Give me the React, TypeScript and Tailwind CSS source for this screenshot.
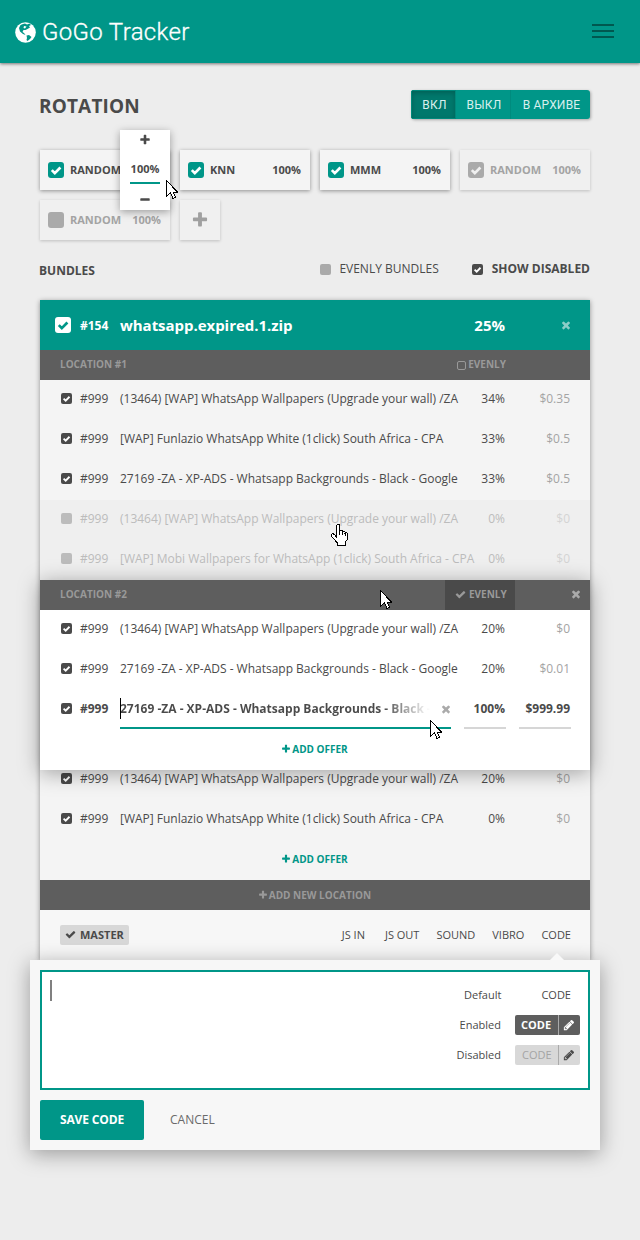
import type { ReactNode } from "react";

const ICONS = {
  check: "M1671 566q0 40-28 68l-724 724-136 136q-28 28-68 28t-68-28l-136-136-362-362q-28-28-28-68t28-68l136-136q28-28 68-28t68 28l294 295 656-657q28-28 68-28t68 28l136 136q28 28 28 68z",
  times: "M1490 1322q0 40-28 68l-136 136q-28 28-68 28t-68-28l-294-294-294 294q-28 28-68 28t-68-28l-136-136q-28-28-28-68t28-68l294-294-294-294q-28-28-28-68t28-68l136-136q28-28 68-28t68 28l294 294 294-294q28-28 68-28t68 28l136 136q28 28 28 68t-28 68l-294 294 294 294q28 28 28 68z",
  plus: "M1600 736v192q0 40-28 68t-68 28h-416v416q0 40-28 68t-68 28h-192q-40 0-68-28t-28-68v-416h-416q-40 0-68-28t-28-68v-192q0-40 28-68t68-28h416v-416q0-40 28-68t68-28h192q40 0 68 28t28 68v416h416q40 0 68 28t28 68z",
  minus: "M1600 736v192q0 40-28 68t-68 28h-1216q-40 0-68-28t-28-68v-192q0-40 28-68t68-28h1216q40 0 68 28t28 68z",
  pencil: "M491 1536l91-91-235-235-91 91v107h128v128h107zm523-928q0-22-22-22-10 0-17 7l-542 542q-7 7-7 17 0 22 22 22 10 0 17-7l542-542q7-7 7-17zm-54-192l416 416-832 832h-416v-416zm683 96q0 53-37 90l-166 166-416-416 166-165q36-38 90-38 53 0 91 38l235 234q37 39 37 91z",
};

function Icon({ name, className }: { name: keyof typeof ICONS; className?: string }) {
  return (
    <svg viewBox="0 0 1792 1792" fill="currentColor" className={`shrink-0 ${className ?? ""}`}>
      <path d={ICONS[name]} />
    </svg>
  );
}

function Box({ checked, className, tick }: { checked: boolean; className: string; tick?: string }) {
  return (
    <svg viewBox="0 0 16 16" className={`shrink-0 ${className}`}>
      <rect width="16" height="16" rx="3" fill="currentColor" />
      {checked && <path d="M3.8 8.1l3 3 5.6-5.6" fill="none" stroke={tick ?? "#fff"} strokeWidth="2.7" />}
    </svg>
  );
}

function Arrow({ className }: { className: string }) {
  return (
    <svg viewBox="0 0 12 19" width="12" height="19" className={`absolute z-30 ${className}`} shapeRendering="crispEdges">
      <path d="M0.5 0.5V16.5L4.5 12.5L7 18.5L9.5 17.5L7.2 12H11.5Z" fill="#fff" stroke="#000" />
    </svg>
  );
}

function Hand({ className }: { className: string }) {
  return (
    <svg viewBox="0 0 17 22" width="17" height="22" className={`absolute z-30 ${className}`} shapeRendering="crispEdges">
      <path d="M5.5 14V2Q5.5 .5 7 .5T8.5 2V7Q9 5.7 10.4 6.2T11.5 8Q12.2 6.7 13.4 7.3T14.2 9Q16.5 7.8 16.5 10.5V15L14.5 18V21.5H6.500V19L1 13Q-.5 10.3 1.5 9.700Q3 9.500 5.500 13M8.500 7V11M11.500 8V11M14.200 9V12" fill="#fff" stroke="#000" />
    </svg>
  );
}

function Card({ name, checked = true, muted = false }: { name: string; checked?: boolean; muted?: boolean }) {
  return (
    <div className={`flex h-10 w-[130px] items-center pl-2 pr-[9px] text-[11px] font-bold ${muted ? "bg-[#f0f0f0] text-[#a3a3a3] shadow-[0_1px_3px_rgba(0,0,0,0.2)]" : "bg-[#f4f4f4] text-[#4a4a4a] shadow-[0_1px_4px_rgba(0,0,0,0.4)]"}`}>
      <Box checked={checked} className={muted ? "size-4 text-[#aaa]" : "size-4 text-[#009688]"} tick={muted ? "#f0f0f0" : "#fff"} />
      <span className="-mt-0.5 ml-1.5 flex-1">{name}</span>
      <span className="-mt-0.5">100%</span>
    </div>
  );
}

type Offer = { title: string; share: string; price: string };
const WALL = "(13464) [WAP] WhatsApp Wallpapers (Upgrade your wall) /ZA";
const FUN = "[WAP] Funlazio WhatsApp White (1click) South Africa - CPA";
const GOOGLE = "27169 -ZA - XP-ADS - Whatsapp Backgrounds - Black - Google";

function Row({ title, share, price, off = false }: Offer & { off?: boolean }) {
  return (
    <div className={`flex h-10 items-center whitespace-nowrap pb-[3px] pl-[20.5px] pr-5 text-[12px] ${off ? "text-[#bcbcbc]" : "text-[#4a4a4a]"}`}>
      <Box checked={!off} className="size-[11px]" />
      <span className="ml-[8.5px] w-10">#999</span>
      <span className="w-[330px] tracking-[-0.01px]">{title}</span>
      <span className="w-[55px] text-right">{share}</span>
      <span className={`flex-1 text-right ${off ? "text-[#d4d4d4]" : "text-[#a4a4a4]"}`}>{price}</span>
    </div>
  );
}

function LocationBar({ label, children }: { label: string; children: ReactNode }) {
  return (
    <div className="flex h-[30px] items-center bg-[#5e5e5e] pl-5 text-[10px] font-bold text-[#999]">
      <span className="-mt-0.5 flex-1">{label}</span>
      {children}
    </div>
  );
}

function AddOffer() {
  return (
    <div className="flex h-10 items-center justify-center gap-[1px] pb-0.5 pr-px text-[10px] font-bold text-[#009688]">
      <Icon name="plus" className="size-[10px]" />
      <span>ADD OFFER</span>
    </div>
  );
}

export default function App() {
  return (
    <div className="relative h-[1240px] w-[640px] overflow-hidden bg-[#ededed] font-['Open_Sans','Noto_Sans',sans-serif] leading-none text-[#4a4a4a]">
      <header className="flex h-[63px] items-center bg-[#009688] pl-[15px] pr-[26px] pt-px shadow-[0_1px_3px_rgba(0,0,0,0.5)]">
        <svg viewBox="0 0 21 21" className="size-[21px]">
          <circle cx="10.500" cy="10.500" r="10.300" fill="#fff" />
          <path d="M5.500 3L8 2L10 1.500L12 2.500L14.500 1.500L16 3L14 4L15 5.500L12.500 7L10.500 8L8.500 8L7.500 10L9 11L10.500 13L8 12L5 9.500L4 6Z M11.500 13.500L14 13L16.500 15L15 17L12.500 19L11.500 18L12 16Z" fill="#009688" />
          <path d="M9 4L11.500 4.500L10 6.500L8.500 6Z" fill="#fff" />
        </svg>
        <h1 className="ml-1.5 flex-1 font-[Roboto] text-[24px] font-light tracking-[0.35px] text-white [-webkit-text-stroke:0.3px_white]">GoGo Tracker</h1>
        <div className="-mt-[3px] flex flex-col gap-1">
          <i className="h-0.5 w-[22px] bg-[#00584f]" />
          <i className="h-0.5 w-[22px] bg-[#00584f]" />
          <i className="h-0.5 w-[22px] bg-[#00584f]" />
        </div>
      </header>

      <main className="pl-10 pr-[50px]">
        <div className="flex items-center justify-between pt-[27px]">
          <h2 className="-ml-px mt-[3px] text-[19px] font-bold tracking-[0.15px]">ROTATION</h2>
          <div className="flex h-[29px] overflow-hidden rounded-[3px] bg-[#009688] font-[Roboto] text-[12px] tracking-[0.2px] text-[#d9efed] shadow-[1px_1px_3px_rgba(0,0,0,0.3)]">
            <span className="flex w-[45px] items-center justify-center border border-[#00887b] bg-[#00786c] pl-0.5 shadow-[inset_0_2px_5px_rgba(0,0,0,0.2)]">ВКЛ</span>
            <span className="flex w-[55px] items-center justify-center border-r border-[#008b7e] pl-0.5">ВЫКЛ</span>
            <span className="flex w-[79px] items-center justify-center pl-0.5">В АРХИВЕ</span>
          </div>
        </div>

        <section className="relative mt-[31px] flex flex-wrap gap-2.5">
          <Card name="RANDOM" />
          <Card name="KNN" />
          <Card name="MMM" />
          <Card name="RANDOM" muted />
          <Card name="RANDOM" muted checked={false} />
          <div className="flex size-10 items-center justify-center bg-[#f0f0f0] text-[#a0a0a0] shadow-[0_1px_3px_rgba(0,0,0,0.2)]">
            <Icon name="plus" className="size-[18px]" />
          </div>
          <div className="absolute -top-5 left-20 z-10 flex h-20 w-[50px] flex-col items-center bg-white text-[11px] font-bold shadow-[0_2px_8px_rgba(0,0,0,0.35)]">
            <Icon name="plus" className="mt-1 size-3" />
            <span className="mt-[17px]">100%</span>
            <i className="mt-2 h-0.5 w-[30px] bg-[#009688]" />
            <Icon name="minus" className="mt-2.5 size-3" />
          </div>
        </section>

        <div className="mt-[21px] flex h-4 items-center text-[12px]">
          <h3 className="-ml-px mt-[3px] flex-1 font-bold">BUNDLES</h3>
          <Box checked={false} className="size-[11px] text-[#aaa]" />
          <span className="ml-2">EVENLY BUNDLES</span>
          <Box checked className="ml-[33px] size-[11px]" />
          <span className="ml-[9px] font-bold">SHOW DISABLED</span>
        </div>

        <section className="mt-[23px] h-[660px] bg-[#f4f4f4] shadow-[0_1px_5px_rgba(0,0,0,0.4)]">
          <div className="flex h-[50px] items-center bg-[#009688] pl-[15px] pr-[18px] font-bold text-white">
            <Box checked tick="#009688" className="size-4" />
            <span className="ml-[9px] w-10 pt-0.5 text-[12px]">#154</span>
            <span className="flex-1 text-[15px] tracking-[-0.04px]">whatsapp.expired.1.zip</span>
            <span className="mr-[55px] text-[15px]">25%</span>
            <Icon name="times" className="size-3 text-[#8ccdc7]" />
          </div>
          <LocationBar label="LOCATION #1">
            <i className="mr-0.5 size-[9px] rounded-[2px] border border-[#999]" />
            <span className="-mt-0.5 mr-[84px]">EVENLY</span>
          </LocationBar>
          <Row title={WALL} share="34%" price="$0.35" />
          <Row title={FUN} share="33%" price="$0.5" />
          <Row title={GOOGLE} share="33%" price="$0.5" />
          <div className="bg-[#efefef]">
            <Row off title={WALL} share="0%" price="$0" />
            <Row off title="[WAP] Mobi Wallpapers for WhatsApp (1click) South Africa - CPA" share="0%" price="$0" />
          </div>

          <div className="relative z-10 h-[190px] bg-white shadow-[0_3px_20px_rgba(0,0,0,0.35)]">
            <LocationBar label="LOCATION #2">
              <span className="flex h-full w-[70px] items-center bg-[#4a4a4a] pb-0.5 pl-[10px]">
                <Icon name="check" className="mr-[3px] size-[11px]" />
                EVENLY
              </span>
              <Icon name="times" className="-mt-0.5 ml-[55px] mr-2 size-3 text-[#aaa]" />
            </LocationBar>
            <Row title={WALL} share="20%" price="$0" />
            <Row title={GOOGLE} share="20%" price="$0.01" />
            <div className="flex h-10 whitespace-nowrap pl-[20.5px] pr-[19px] text-[12px] font-bold">
              <Box checked className="mt-[13px] size-[11px]" />
              <span className="ml-[8.5px] mt-[13px] w-10">#999</span>
              <div className="relative flex h-[39px] w-[331px] border-b-2 border-[#009688]">
                <i className="absolute left-0 top-2 h-[21px] w-px bg-black" />
                <span className="mt-[11px] h-5 w-[310px] bg-gradient-to-r from-[#4a4a4a] from-85% to-transparent bg-clip-text pt-0.5 leading-none text-transparent">27169 -ZA - XP-ADS - Whatsapp Backgrounds - Black -</span>
                <Icon name="times" className="ml-[10px] mt-[13px] size-3 text-[#aaa]" />
              </div>
              <span className="ml-[13px] h-[39px] w-[42px] border-b-2 border-[#d6d6d6] pr-px pt-[13px] text-right">100%</span>
              <span className="ml-[13px] h-[39px] w-[52px] border-b-2 border-[#d6d6d6] pr-px pt-[13px] text-right">$999.99</span>
            </div>
            <AddOffer />
          </div>

          <div className="-mt-2.5">
            <Row title={WALL} share="20%" price="$0" />
            <Row title={FUN} share="0%" price="$0" />
            <AddOffer />
          </div>
          <div className="flex h-[30px] items-center justify-center bg-[#5e5e5e] pr-px text-[10px] font-bold text-[#999]">
            <Icon name="plus" className="mr-px size-[10px]" />
            ADD NEW LOCATION
          </div>
          <div className="flex h-[50px] items-center bg-[#f7f7f7] pl-5 pr-[19px] text-[11px]">
            <span className="flex h-5 w-[69px] items-center rounded-[2px] bg-[#d8d8d8] pb-0.5 pl-[5px] font-bold">
              <Icon name="check" className="mr-1 size-[11px]" />
              MASTER
            </span>
            <nav className="-mt-0.5 ml-auto flex gap-[17px]">
              <span className="mr-[3px]">JS IN</span>
              <span>JS OUT</span>
              <span>SOUND</span>
              <span>VIBRO</span>
              <span>CODE</span>
            </nav>
          </div>
        </section>

        <section className="relative z-20 -mx-2.5 h-[190px] bg-[#f7f7f7] p-2.5 shadow-[0_4px_20px_rgba(0,0,0,0.35)]">
          <svg viewBox="0 0 14 7" className="absolute -top-[7px] right-9 h-[7px] w-[14px]">
            <path d="M0 7L7 0L14 7Z" fill="#f9f9f9" />
          </svg>
          <div className="flex h-[120px] justify-between border-2 border-[#009688] bg-white pl-2 pr-2 pt-2 text-[11px]">
            <i className="h-[21px] w-[2px] bg-[#808080]" />
            <div className="flex flex-col items-end">
              <div className="flex h-[30px] items-center pb-0.5"><span>Default</span><span className="ml-[40px] mr-[9px]">CODE</span></div>
              <div className="flex h-[30px] items-center">
                <span className="-mt-0.5">Enabled</span>
                <span className="ml-3.5 flex h-5 w-[65px] items-center rounded-[2px] bg-[#5e5e5e] font-bold text-white">
                  <span className="flex h-full w-[44px] items-center border-r border-[#aaa] pb-0.5 pl-1.5">CODE</span>
                  <Icon name="pencil" className="ml-[4px] size-3" />
                </span>
              </div>
              <div className="flex h-[30px] items-center">
                <span className="-mt-0.5">Disabled</span>
                <span className="ml-3.5 flex h-5 w-[65px] items-center rounded-[2px] bg-[#d8d8d8]">
                  <span className="flex h-full w-[44px] items-center border-r border-[#aaa] pb-0.5 pl-[7px] text-[#a4a4a4]">CODE</span>
                  <Icon name="pencil" className="ml-[4px] size-3" />
                </span>
              </div>
            </div>
          </div>
          <div className="mt-2.5 flex h-10 items-center text-[12px]">
            <button className="h-10 w-[104px] rounded-[2px] bg-[#009688] font-bold tracking-[-0.15px] text-white">SAVE CODE</button>
            <span className="ml-[26px] text-[#6a6a6a]">CANCEL</span>
          </div>
        </section>
      </main>

      <Arrow className="left-[166px] top-[180px]" />
      <Arrow className="left-[380px] top-[590px]" />
      <Arrow className="left-[430px] top-[720px]" />
      <Hand className="left-[331px] top-[524px]" />
    </div>
  );
}
